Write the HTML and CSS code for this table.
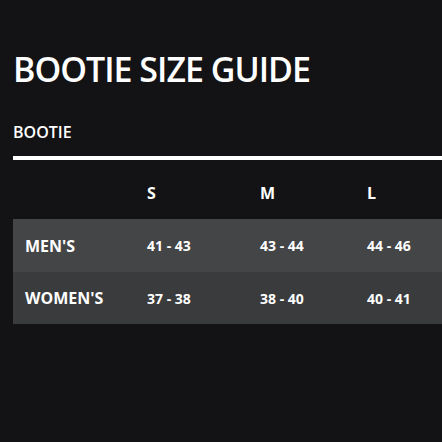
FILE: index.html
```html
<!DOCTYPE html>
<html>
<head>
<meta charset="utf-8">
<link rel="stylesheet" href="styles.css">
</head>
<body>
<main class="guide">
  <h1 class="title">BOOTIE SIZE GUIDE</h1>
  <h2 class="subtitle">BOOTIE</h2>
  <div class="rule"></div>
  <table class="sizes">
    <thead>
      <tr><th class="corner"></th><th>S</th><th>M</th><th>L</th></tr>
    </thead>
    <tbody>
      <tr class="odd"><th>MEN'S</th><td>41 - 43</td><td>43 - 44</td><td>44 - 46</td></tr>
      <tr class="even"><th>WOMEN'S</th><td>37 - 38</td><td>38 - 40</td><td>40 - 41</td></tr>
    </tbody>
  </table>
</main>
</body>
</html>
```
FILE: styles.css
```css
html, body {
  margin: 0;
  padding: 0;
  background: #131315;
  height: 100%;
}
body {
  font-family: "Open Sans", "Liberation Sans", sans-serif;
  color: #ffffff;
  overflow: hidden;
}
.guide {
  padding: 49px 0 0 13px;
}
.title {
  margin: 0;
  font-size: 34px;
  font-weight: 600;
  line-height: 40px;
  letter-spacing: -1px;
}
.subtitle {
  margin: 32px 0 0 0;
  font-size: 16px;
  font-weight: 600;
  line-height: 22px;
}
.rule {
  margin-top: 13px;
  height: 4px;
  background: #ffffff;
}
.sizes {
  width: 100%;
  border-collapse: collapse;
  table-layout: fixed;
  margin-top: 1px;
}
.sizes th, .sizes td {
  text-align: left;
  padding: 0;
}
.sizes thead th {
  height: 37px;
  font-size: 16px;
  line-height: 22px;
  font-weight: 700;
  vertical-align: top;
  padding-top: 21px;
}
.sizes .corner { width: 134px; }
.sizes thead th:nth-child(2) { width: 113px; }
.sizes thead th:nth-child(3) { width: 107px; }
.sizes tbody th {
  padding-left: 12px;
  font-size: 16px;
  font-weight: 700;
}
.sizes tbody td {
  font-size: 14px;
  font-weight: 700;
}
.sizes tbody tr.odd { height: 53px; background: #444546; }
.sizes tbody tr.even { height: 52px; background: #3a3b3c; }
```
